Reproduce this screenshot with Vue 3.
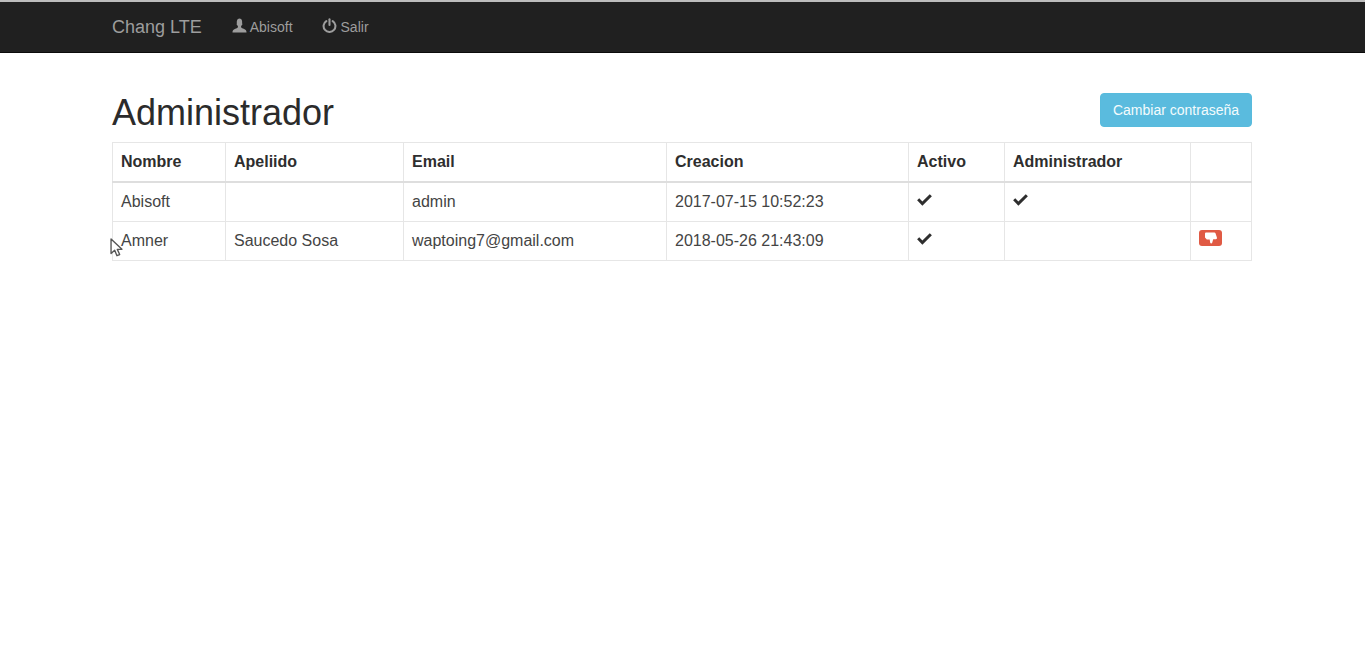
<script setup>
const rows = [
  { nombre: 'Abisoft', apellido: '', email: 'admin', creacion: '2017-07-15 10:52:23', activo: true, admin: true, action: false },
  { nombre: 'Amner', apellido: 'Saucedo Sosa', email: 'waptoing7@gmail.com', creacion: '2018-05-26 21:43:09', activo: true, admin: false, action: true },
]
const cols = ['Nombre', 'Apeliido', 'Email', 'Creacion', 'Activo', 'Administrador', '']
const widths = [113, 178, 263, 242, 96, 186, 61]
</script>

<template>
  <div class="page">
    <nav class="navbar">
      <div class="nav-inner">
        <a class="brand">Chang LTE</a>
        <a class="nav-link">
          <svg class="nav-icon" viewBox="0 0 16 16"><path d="M0.500 15.500c0-2.800 1.100-3.500 3.700-4.400 1.400-.5 2.200-1 2.200-1.900 0-.5-.4-.8-.8-1.500-.4-.2-.7-.8-.7-1.300 0-.3.1-.5.3-.6C4.900 3.500 5.300.5 8 .5s3.100 3 2.800 5.300c.2.100.3.300.3.600 0 .5-.3 1.100-.7 1.300-.4.7-.8 1-.8 1.500 0 .9.800 1.400 2.200 1.900 2.600.9 3.700 1.600 3.700 4.400z" fill="currentColor"/></svg>
          <span>Abisoft</span>
        </a>
        <a class="nav-link">
          <svg class="nav-icon" viewBox="0 0 16 16" fill="none" stroke="currentColor" stroke-width="2.200" stroke-linecap="round"><path d="M8 1.300v6.200"/><path d="M4.600 3.300a6.300 6.300 0 1 0 6.800 0"/></svg>
          <span>Salir</span>
        </a>
      </div>
    </nav>

    <main class="container">
      <div class="head">
        <h1>Administrador</h1>
        <button class="btn-info">Cambiar contraseña</button>
      </div>
      <table class="grid">
        <colgroup><col v-for="(w, i) in widths" :key="i" :style="{ width: w + 'px' }"></colgroup>
        <thead>
          <tr><th v-for="c in cols" :key="c">{{ c }}</th></tr>
        </thead>
        <tbody>
          <tr v-for="r in rows" :key="r.nombre">
            <td>{{ r.nombre }}</td>
            <td>{{ r.apellido }}</td>
            <td>{{ r.email }}</td>
            <td>{{ r.creacion }}</td>
            <td><svg v-if="r.activo" class="check" viewBox="0 0 16 13"><path d="M2.300 4.500 0 6.800 5.700 12.600 16 2.400 13.700 0.200 5.700 8z" fill="currentColor"/></svg></td>
            <td><svg v-if="r.admin" class="check" viewBox="0 0 16 13"><path d="M2.300 4.500 0 6.800 5.700 12.600 16 2.400 13.700 0.200 5.700 8z" fill="currentColor"/></svg></td>
            <td>
              <span v-if="r.action" class="btn-danger">
                <svg viewBox="0 0 14 12"><path d="M2.300 0.500h8c.6 0 1 .3 1.200.8l1.400 4.300c.3.900-.2 1.600-1.100 1.600H9.200L8.200 10.700c-.3 1-1.700 1-2 0L5.700 7.400H2.800L1 5.600V1.700c0-.7.500-1.200 1.300-1.200z" fill="#fff"/></svg>
              </span>
            </td>
          </tr>
        </tbody>
      </table>
    </main>

    <svg class="cursor" viewBox="0 0 14 22"><path d="M1 1v16l4-3.500 2.500 6 3-1.300-2.600-5.700H13z" fill="#fff" stroke="#555" stroke-width="1.500" stroke-linejoin="round"/></svg>
  </div>
</template>

<style scoped>
.page {
  position: relative;
  min-height: 659px;
  background: #fff;
  color: #444;
  font-family: "Liberation Sans", Arial, sans-serif;
}
.navbar {
  height: 50px;
  background: #202020;
  border-top: 2px solid #bdbdbd;
  border-bottom: 1px solid #0b0b0b;
}
.nav-inner {
  width: 1141px;
  margin-left: 112px;
  height: 100%;
  display: flex;
  align-items: center;
}
.brand {
  font-size: 18px;
  color: #9d9d9d;
  margin-right: 30px;
}
.nav-link {
  display: flex;
  align-items: center;
  gap: 3px;
  font-size: 14px;
  color: #9d9d9d;
  margin-right: 29px;
}
.nav-link:last-child {
  gap: 4px;
}
.nav-icon {
  width: 15px;
  height: 15px;
  margin-top: -3px;
}
.container {
  width: 1140px;
  margin-left: 112px;
}
.head {
  display: flex;
  justify-content: space-between;
  align-items: flex-start;
  padding-top: 40px;
  height: 89px;
  box-sizing: border-box;
}
h1 {
  margin: 0;
  font-size: 36px;
  font-weight: 400;
  line-height: 40px;
  color: #2b2b2b;
}
.btn-info {
  width: 152px;
  height: 34px;
  padding: 0;
  border: 1px solid #58bbdd;
  border-radius: 4px;
  background: #5abbde;
  color: #f4fbfd;
  font: 14px "Liberation Sans", Arial, sans-serif;
}
.grid {
  width: 1139px;
  table-layout: fixed;
  border-collapse: collapse;
  border: 1px solid #e6e6e6;
  font-size: 16px;
  line-height: 22px;
}
th, td {
  box-sizing: border-box;
  border: 1px solid #e6e6e6;
  padding: 8px;
  text-align: left;
  vertical-align: top;
  white-space: nowrap;
}
th {
  font-weight: 700;
  color: #2e2e2e;
  border-bottom: 2px solid #dedede;
}
.check {
  display: block;
  width: 15px;
  height: 12px;
  margin-top: 3px;
  color: #2e2e2e;
}
.btn-danger {
  display: flex;
  align-items: center;
  justify-content: center;
  width: 23px;
  height: 16px;
  border-radius: 3px;
  background: #e05a44;
}
.btn-danger svg {
  width: 14px;
  height: 12px;
}
.cursor {
  position: absolute;
  left: 110px;
  top: 238px;
  width: 13px;
  height: 20px;
}
</style>
